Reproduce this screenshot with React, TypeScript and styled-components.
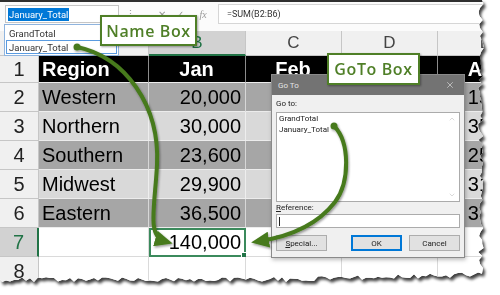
import React from 'react';
import styled, { createGlobalStyle } from 'styled-components';
import { ChevronUp, ChevronDown, X } from 'lucide-react';

const GREEN = '#217346';
const INK = '#467a1d';

const GlobalStyle = createGlobalStyle`
    html, body {
        margin: 0;
        padding: 0;
        background: #fff;
    }
    body {
        font-family: 'Liberation Sans', Arial, sans-serif;
    }
`;

const Page = styled.div`
    width: 500px;
    height: 295px;
    overflow: hidden;
    background: #fff;
`;

const Torn = styled.div`
    filter: drop-shadow(2px 3px 1.5px rgba(0, 0, 0, 0.75));
`;

const Sheet = styled.div`
    position: relative;
    width: 500px;
    height: 295px;
    background: #fff;
    overflow: hidden;
`;

const FormulaBar = styled.div`
    border-top: 2px solid #2f2f2f;
    background: #fbfbfb;
    display: flex;
    align-items: flex-start;
    padding: 3px 0 0 5px;
    box-sizing: border-box;
    height: 31px;
    font-family: Roboto, 'Liberation Sans', sans-serif;
`;

const NameBox = styled.div`
    width: 114px;
    height: 18px;
    box-sizing: border-box;
    border: 1px solid #c6c6c6;
    background: #fff;
    display: flex;
    align-items: center;
    padding-left: 2px;
    font-size: 9.5px;
`;

const Selected = styled.span`
    background: #0078d7;
    color: #fff;
    padding: 1px 1px;
`;

const Dots = styled.div`
    width: 22px;
    height: 18px;
    display: flex;
    align-items: center;
    justify-content: center;
    color: #a0a0a0;
    font-size: 11px;
`;

const IconGroup = styled.div`
    display: flex;
    margin-left: 12px;
    height: 18px;
    align-items: center;
`;

const BarIcon = styled.span<{ $w: number }>`
    width: ${p => p.$w}px;
    text-align: center;
    color: #9a9a9a;
    font-size: 10px;
    font-style: ${p => (p.$w > 20 ? 'italic' : 'normal')};
    font-family: 'Liberation Serif', serif;
`;

const FormulaInput = styled.div`
    flex: 1;
    margin-left: 1px;
    height: 20px;
    box-sizing: border-box;
    border: 1px solid #d6d6d6;
    background: #fff;
    display: flex;
    align-items: center;
    padding-left: 8px;
    font-size: 9px;
    color: #333;
    margin-top: -1px;
`;

const Grid = styled.div`
    display: grid;
    grid-template-columns: 39px 110px 97px 96px 96px 96px;
    grid-template-rows: 25px 27px repeat(7, 29px);
`;

const Corner = styled.div`
    background: #f0f0f0;
    border-right: 1px solid #c6c6c6;
    border-bottom: 1px solid #c6c6c6;
`;

const ColHead = styled.div<{ $selected?: boolean }>`
    box-sizing: border-box;
    display: flex;
    align-items: center;
    justify-content: center;
    background: ${p => (p.$selected ? '#d2d2d2' : '#f0f0f0')};
    border-right: 1px solid #c6c6c6;
    border-bottom: ${p => (p.$selected ? `2px solid ${GREEN}` : '1px solid #c6c6c6')};
    color: ${p => (p.$selected ? GREEN : '#444')};
    font-size: 17px;
`;

const RowHead = styled.div<{ $selected?: boolean }>`
    box-sizing: border-box;
    display: flex;
    align-items: center;
    justify-content: center;
    background: ${p => (p.$selected ? '#d2d2d2' : '#f0f0f0')};
    border-bottom: 1px solid #c6c6c6;
    border-right: ${p => (p.$selected ? `2px solid ${GREEN}` : '1px solid #c6c6c6')};
    color: ${p => (p.$selected ? GREEN : '#222')};
    font-size: 20px;
`;

type Tone = 'black' | 'dark' | 'light' | 'white';

const toneBg: Record<Tone, string> = {
    black: '#000',
    dark: '#a6a6a6',
    light: '#d9d9d9',
    white: '#fff',
};

const Cell = styled.div<{ $tone: Tone; $align: 'left' | 'right' | 'center'; $active?: boolean }>`
    position: relative;
    box-sizing: border-box;
    display: flex;
    align-items: center;
    justify-content: ${p => (p.$align === 'left' ? 'flex-start' : p.$align === 'right' ? 'flex-end' : 'center')};
    padding: 0 4px 0 3px;
    background: ${p => toneBg[p.$tone]};
    color: ${p => (p.$tone === 'black' ? '#fff' : '#000')};
    font-weight: ${p => (p.$tone === 'black' ? 700 : 400)};
    font-size: 20px;
    white-space: nowrap;
    border-right: 1px solid ${p => (p.$tone === 'white' ? '#dadada' : 'rgba(255,255,255,0.55)')};
    border-bottom: 1px solid ${p => (p.$tone === 'white' ? '#dadada' : '#ececec')};
    ${p => p.$active && `outline: 2px solid #3b8a5c; outline-offset: -2px;`}
`;

const Handle = styled.span`
    position: absolute;
    right: -3px;
    bottom: -3px;
    width: 5px;
    height: 5px;
    background: ${GREEN};
    border: 1px solid #fff;
`;

const Dropdown = styled.div`
    position: absolute;
    left: 4px;
    top: 24px;
    width: 115px;
    height: 32px;
    box-sizing: border-box;
    border: 1px solid #8fb4de;
    background: #fff;
    padding: 1px;
    font-family: Roboto, 'Liberation Sans', sans-serif;
    font-size: 9.5px;
    color: #333;
`;

const DropItem = styled.div<{ $hot?: boolean }>`
    height: 14px;
    box-sizing: border-box;
    display: flex;
    align-items: center;
    padding-left: 2px;
    border: 1px solid ${p => (p.$hot ? '#5a9be0' : 'transparent')};
`;

const Callout = styled.div<{ $left: number; $top: number; $w: number; $h: number }>`
    position: absolute;
    left: ${p => p.$left}px;
    top: ${p => p.$top}px;
    width: ${p => p.$w}px;
    height: ${p => p.$h}px;
    box-sizing: border-box;
    border: 2px solid #4f7f27;
    background: #fff;
    box-shadow: 1px 1px 2px rgba(0, 0, 0, 0.35);
    display: flex;
    align-items: center;
    justify-content: center;
    color: #4f7f27;
    font-family: 'Open Sans', 'Noto Sans', sans-serif;
    font-weight: 600;
    font-size: 16px;
    letter-spacing: 0.6px;
`;

const Dialog = styled.div`
    position: absolute;
    left: 271px;
    top: 74px;
    width: 194px;
    height: 184px;
    box-sizing: border-box;
    border: 1px solid #8a8a8a;
    background: #f0f0f0;
    box-shadow: 1px 2px 4px rgba(0, 0, 0, 0.25);
    display: flex;
    flex-direction: column;
    font-family: Roboto, 'Liberation Sans', sans-serif;
    font-size: 8px;
    color: #222;
`;

const TitleBar = styled.div`
    height: 20px;
    background: #737373;
    color: #e4e4e4;
    display: flex;
    align-items: center;
    justify-content: space-between;
    padding: 0 9px 0 6px;
    font-size: 8px;
`;

const DialogBody = styled.div`
    flex: 1;
    display: flex;
    flex-direction: column;
    padding: 0 4px 0 4px;
`;

const FieldLabel = styled.div<{ $gap?: number }>`
    height: 12px;
    margin-top: ${p => p.$gap ?? 0}px;
    display: flex;
    align-items: center;
    line-height: 10px;
`;

const ListBox = styled.div`
    height: 90px;
    margin-top: 2px;
    box-sizing: border-box;
    border: 1px solid #ababab;
    background: #fff;
    display: flex;
`;

const ListItems = styled.div`
    flex: 1;
    padding: 1px 0 0 2px;
    line-height: 10.5px;
`;

const ScrollTrack = styled.div`
    width: 14px;
    display: flex;
    flex-direction: column;
    justify-content: space-between;
    align-items: center;
    padding: 2px 0;
    color: #b4b4b4;
`;

const RefInput = styled.div`
    height: 14px;
    box-sizing: border-box;
    border: 1px solid #ababab;
    background: #fff;
    display: flex;
    align-items: center;
    padding-left: 2px;
`;

const Caret = styled.span`
    width: 1px;
    height: 9px;
    background: #222;
`;

const ButtonRow = styled.div`
    display: flex;
    margin-top: 7px;
    gap: 7px;
`;

const Button = styled.div<{ $default?: boolean; $push?: boolean }>`
    width: 51px;
    height: 16px;
    box-sizing: border-box;
    border: 1px solid ${p => (p.$default ? '#0078d7' : '#adadad')};
    box-shadow: ${p => (p.$default ? 'inset 0 0 0 1px #0078d7' : 'none')};
    background: #e1e1e1;
    display: flex;
    align-items: center;
    justify-content: center;
    margin-left: ${p => (p.$push ? 'auto' : '0')};
`;

const Overlay = styled.svg`
    position: absolute;
    left: 0;
    top: 0;
    pointer-events: none;
`;

const tornClip = (() => {
    let seed = 11;
    const rnd = () => {
        seed = (seed * 9301 + 49297) % 233280;
        return seed / 233280;
    };
    const pts: string[] = ['0px 0px'];
    for (let y = 0; y <= 268; y += 4) pts.push(`${(478 + rnd() * 6).toFixed(1)}px ${y}px`);
    for (let x = 482; x >= 0; x -= 4) {
        const base = x > 300 ? 272 + (482 - x) / 40 : 277;
        pts.push(`${x}px ${(base + rnd() * 5).toFixed(1)}px`);
    }
    pts.push('0px 279px');
    return `polygon(${pts.join(', ')})`;
})();

const rows: { tone: Tone; cells: string[] }[] = [
    { tone: 'black', cells: ['Region', 'Jan', 'Feb', 'Mar', 'Apr'] },
    { tone: 'dark', cells: ['Western', '20,000', '25,000', '22,000', '15,000'] },
    { tone: 'light', cells: ['Northern', '30,000', '31,500', '29,000', '35,000'] },
    { tone: 'dark', cells: ['Southern', '23,600', '24,000', '26,100', '25,500'] },
    { tone: 'light', cells: ['Midwest', '29,900', '28,400', '30,300', '31,200'] },
    { tone: 'dark', cells: ['Eastern', '36,500', '34,000', '35,800', '33,400'] },
    { tone: 'white', cells: ['', '140,000', '', '', ''] },
    { tone: 'white', cells: ['', '', '', '', ''] },
];

const App: React.FC = () => {
    return (
        <Page>
            <GlobalStyle />
            <Torn>
                <Sheet style={{ clipPath: tornClip }}>
                    <FormulaBar>
                        <NameBox>
                            <Selected>January_Total</Selected>
                        </NameBox>
                        <Dots>⋮</Dots>
                        <IconGroup>
                            <BarIcon $w={18}>✕</BarIcon>
                            <BarIcon $w={18}>✓</BarIcon>
                            <BarIcon $w={28}>fx</BarIcon>
                        </IconGroup>
                        <FormulaInput>=SUM(B2:B6)</FormulaInput>
                    </FormulaBar>

                    <Grid>
                        <Corner />
                        {['A', 'B', 'C', 'D', 'E'].map(c => (
                            <ColHead key={c} $selected={c === 'B'}>{c}</ColHead>
                        ))}
                        {rows.map((row, r) => (
                            <React.Fragment key={r}>
                                <RowHead $selected={r === 6}>{r + 1}</RowHead>
                                {row.cells.map((text, c) => (
                                    <Cell
                                        key={c}
                                        $tone={row.tone}
                                        $align={c === 0 ? 'left' : row.tone === 'black' ? 'center' : 'right'}
                                        $active={r === 6 && c === 1}
                                    >
                                        {text}
                                        {r === 6 && c === 1 && <Handle />}
                                    </Cell>
                                ))}
                            </React.Fragment>
                        ))}
                    </Grid>

                    <Dropdown>
                        <DropItem>GrandTotal</DropItem>
                        <DropItem $hot>January_Total</DropItem>
                    </Dropdown>

                    <Dialog>
                        <TitleBar>
                            <span>Go To</span>
                            <X size={10} strokeWidth={1.5} color="#e4e4e4" />
                        </TitleBar>
                        <DialogBody>
                            <FieldLabel $gap={3}>Go to:</FieldLabel>
                            <ListBox>
                                <ListItems>
                                    <div>GrandTotal</div>
                                    <div>January_Total</div>
                                </ListItems>
                                <ScrollTrack>
                                    <ChevronUp size={8} strokeWidth={1.5} />
                                    <ChevronDown size={8} strokeWidth={1.5} />
                                </ScrollTrack>
                            </ListBox>
                            <FieldLabel>
                                <span><u>R</u>eference:</span>
                            </FieldLabel>
                            <RefInput>
                                <Caret />
                            </RefInput>
                            <ButtonRow>
                                <Button><span><u>S</u>pecial...</span></Button>
                                <Button $default $push>OK</Button>
                                <Button>Cancel</Button>
                            </ButtonRow>
                        </DialogBody>
                    </Dialog>

                    <Callout $left={100} $top={15} $w={97} $h={31}>Name Box</Callout>
                    <Callout $left={327} $top={53} $w={93} $h={32}>GoTo Box</Callout>

                    <Overlay width={500} height={295}>
                        <defs>
                            <marker
                                id="head"
                                markerWidth={18}
                                markerHeight={16}
                                refX={9}
                                refY={8}
                                orient="auto"
                                markerUnits="userSpaceOnUse"
                            >
                                <path d="M0,0 L18,8 L0,16 Z" fill={INK} />
                            </marker>
                            <filter id="shade" x="-20%" y="-20%" width="140%" height="140%">
                                <feDropShadow dx="1" dy="1.5" stdDeviation="1" floodOpacity="0.4" />
                            </filter>
                        </defs>
                        <g filter="url(#shade)" stroke={INK} strokeWidth={4} fill="none" strokeLinecap="round">
                            <path d="M77,47 C125,57 160,105 157,165 C155,205 147,236 164,241" markerEnd="url(#head)" />
                            <path d="M334,126 C350,142 350,182 335,202 C318,224 292,236 260,241" markerEnd="url(#head)" />
                            <circle cx={77} cy={47} r={3.5} fill={INK} stroke="none" />
                            <circle cx={334} cy={126} r={3.5} fill={INK} stroke="none" />
                        </g>
                    </Overlay>
                </Sheet>
            </Torn>
        </Page>
    );
};

export default App;
